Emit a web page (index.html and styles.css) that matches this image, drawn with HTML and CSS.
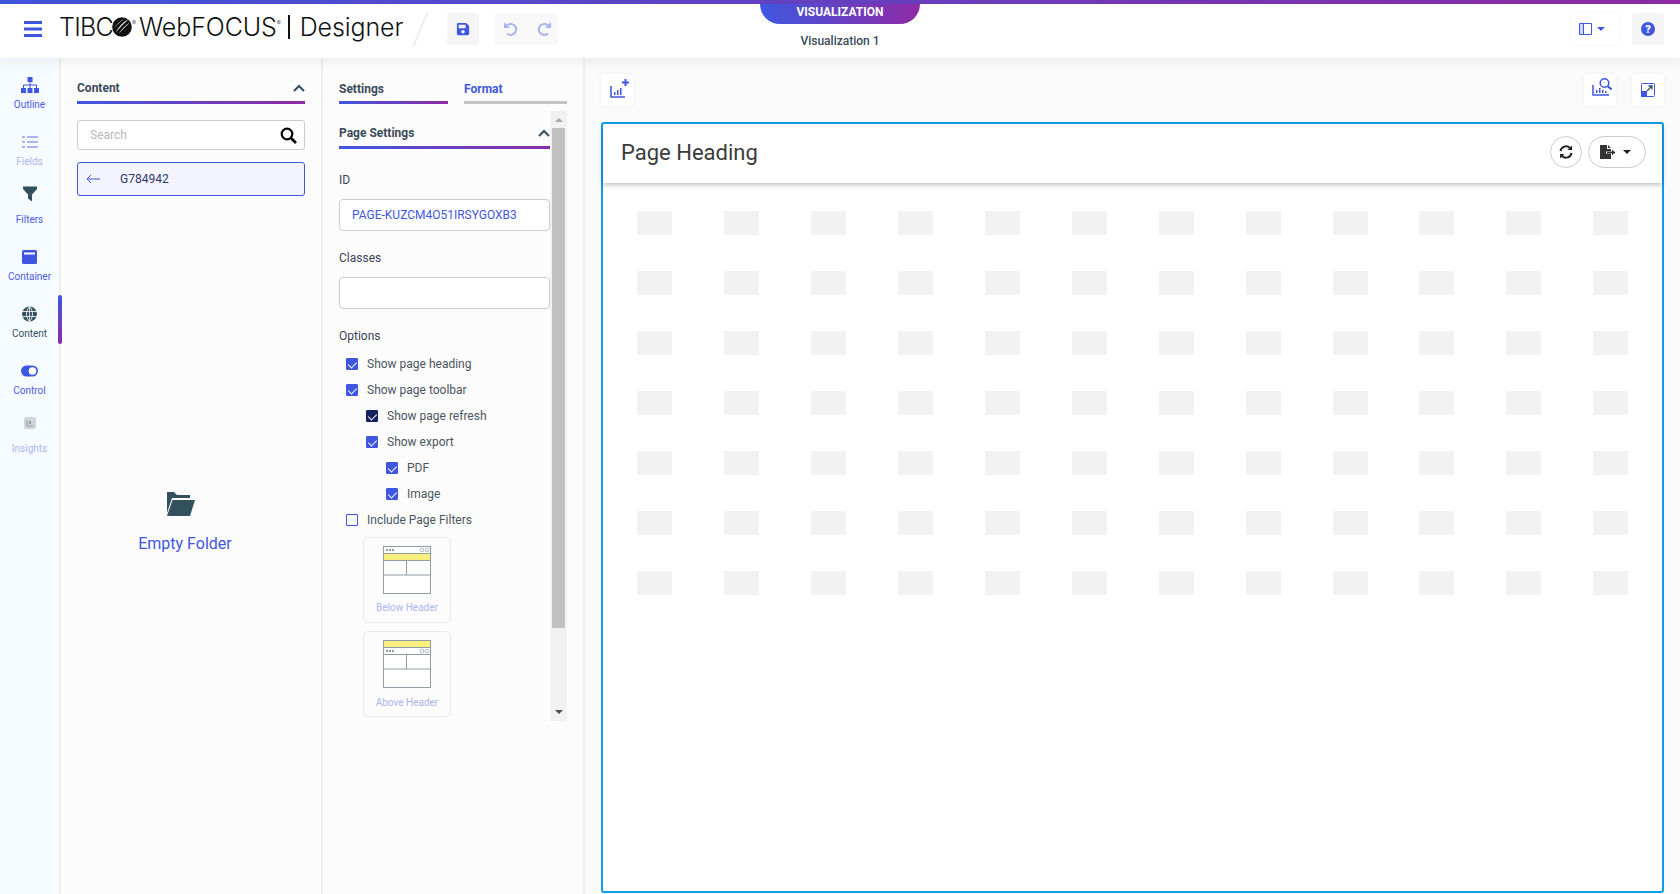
FILE: index.html
```html
<!DOCTYPE html>
<html>

<head>
    <meta charset="UTF-8">
    <title>WebFOCUS Designer</title>
    <link rel="stylesheet" href="styles.css">
</head>

<body>
    <div class="top-strip"></div>
    <header class="topbar">
        <div class="topbar-left">
            <svg class="hamburger" width="18" height="16" viewBox="0 0 18 16"><path fill="#3f57e0" d="M0 0h18v3H0zM0 6.500h18v3H0zM0 13h18v3H0z"/></svg>
            <div class="logo">
                <span class="logo-tibc">TIBC</span>
                <svg class="logo-ball" width="20" height="20" viewBox="0 0 20 20"><circle cx="10" cy="10" r="9.800" fill="#111"/><path fill="#fff" d="M3.500 15.500C6.500 10 11 5 17 1.800 12.500 6 8 10.500 3.500 15.500zM7 16.500c2.500-4.500 6-8 11.500-11.500C14 9 10.500 12.500 7 16.500zM2 11.500C4.500 7.500 8 4 13 1 9 4 5 7.500 2 11.500z"/></svg>
                <sup class="logo-reg">®</sup>
                <span class="logo-web">WebFOCUS</span>
                <sup class="logo-reg">®</sup>
                <span class="logo-pipe"></span>
                <span>Designer</span>
            </div>
            <div class="slash"></div>
            <button class="tool-btn grey">
                <svg width="14" height="14" viewBox="0 0 448 512"><path fill="#3f57e0" d="M433.900 129.900l-83.900-83.900A48 48 0 0 0 316.100 32H48C21.500 32 0 53.500 0 80v352c0 26.500 21.500 48 48 48h352c26.500 0 48-21.500 48-48V163.900a48 48 0 0 0-14.100-34zM224 416c-35.300 0-64-28.700-64-64 0-35.300 28.700-64 64-64s64 28.700 64 64c0 35.300-28.700 64-64 64zm96-304.500V212c0 6.600-5.400 12-12 12H76c-6.600 0-12-5.400-12-12V108c0-6.600 5.400-12 12-12h228.500c3.200 0 6.200 1.300 8.500 3.500l3.500 3.500c2.200 2.300 3.500 5.300 3.500 8.500z"/></svg>
            </button>
            <div class="undo-group">
                <svg width="14" height="14" viewBox="0 0 14 14"><path fill="#a9b5f0" d="M0 0v6h6z"/><path fill="none" stroke="#a9b5f0" stroke-width="2" d="M2.500 3.800A5.500 5.500 0 1 1 3 11.500"/></svg>
                <svg width="14" height="14" viewBox="0 0 14 14"><path fill="#a9b5f0" d="M14 0v6H8z"/><path fill="none" stroke="#a9b5f0" stroke-width="2" d="M11.500 3.800A5.500 5.500 0 1 0 11 11.500"/></svg>
            </div>
        </div>
        <div class="topbar-center">
            <div class="mode-tab">VISUALIZATION</div>
            <div class="doc-name">Visualization 1</div>
        </div>
        <div class="topbar-right">
            <button class="tool-btn wide">
                <svg width="13" height="12" viewBox="0 0 13 12"><path fill="#cdd4f8" d="M1 1h3v10H1z"/><path fill="none" stroke="#3f57e0" d="M.5.500h12v11H.5zM4.500.500v11"/></svg>
                <span class="caret blue"></span>
            </button>
            <button class="tool-btn grey">
                <svg width="14" height="14" viewBox="0 0 14 14"><circle cx="7" cy="7" r="7" fill="#3f57e0"/><text x="7" y="11" text-anchor="middle" class="help-mark">?</text></svg>
            </button>
        </div>
    </header>

    <div class="workspace">
        <nav class="sidebar">
            <a class="side-item">
                <svg width="18" height="16" viewBox="0 0 18 16"><path fill="#3f57e0" d="M6.500 0h5v5h-5zM0 11h5v5H0zM6.500 11h5v5h-5zM13 11h5v5h-5z"/><path fill="none" stroke="#3f57e0" d="M9 5v6M2.500 11V8h13v3"/></svg>
                <span>Outline</span>
            </a>
            <a class="side-item off">
                <svg width="16" height="12" viewBox="0 0 16 12"><path fill="#a9b5f0" d="M0 0h3v2H0zM5 0h11v2H5zM0 5h3v2H0zM5 5h11v2H5zM0 10h3v2H0zM5 10h11v2H5z"/></svg>
                <span>Fields</span>
            </a>
            <a class="side-item raised">
                <svg width="14" height="15" viewBox="0 0 14 15"><path fill="#33505f" d="M0 0h14v2.500L9 8v7L5 12V8L0 2.500z"/></svg>
                <span>Filters</span>
            </a>
            <a class="side-item">
                <svg width="15" height="14" viewBox="0 0 15 14"><rect width="15" height="14" rx="1.500" fill="#3f57e0"/><rect x="2" y="2.500" width="11" height="2" fill="#fff"/></svg>
                <span>Container</span>
            </a>
            <a class="side-item active">
                <svg width="15" height="15" viewBox="0 0 15 15"><circle cx="7.500" cy="7.500" r="7.500" fill="#33505f"/><path fill="none" stroke="#fff" stroke-width=".8" d="M0 5h15M0 10h15M7.500 0v15M7.500 0c-4 4-4 11 0 15M7.500 0c4 4 4 11 0 15"/></svg>
                <span>Content</span>
            </a>
            <a class="side-item">
                <svg width="17" height="11" viewBox="0 0 17 11"><rect width="17" height="11" rx="5.500" fill="#3f57e0"/><circle cx="11.500" cy="5.500" r="3.800" fill="#fff"/></svg>
                <span>Control</span>
            </a>
            <a class="side-item off raised">
                <svg width="14" height="14" viewBox="0 0 14 14"><rect x="1" y="1" width="12" height="12" rx="2" fill="#cfd6da"/><path fill="none" stroke="#8e9ea3" d="M4 4v6h6"/><path fill="#8e9ea3" d="M6 5h2v3H6z"/></svg>
                <span>Insights</span>
            </a>
        </nav>

        <section class="panel content-panel">
            <div class="panel-title">
                <span>Content</span>
                <svg class="chev" width="12" height="8" viewBox="0 0 12 8"><path fill="none" stroke="#33505f" stroke-width="2" d="M1 7l5-5 5 5"/></svg>
            </div>
            <div class="grad-line"></div>
            <div class="search-box">
                <span>Search</span>
                <svg width="17" height="17" viewBox="0 0 17 17"><circle cx="7" cy="7" r="5.300" fill="none" stroke="#000" stroke-width="2.200"/><path stroke="#000" stroke-width="2.600" d="M10.500 10.500l5.500 5.500"/></svg>
            </div>
            <div class="folder-row">
                <svg width="14" height="10" viewBox="0 0 14 10"><path fill="none" stroke="#3f57e0" d="M14 5H1M5 1L1 5l4 4"/></svg>
                <span>G784942</span>
            </div>
            <div class="empty-folder">
                <svg width="28" height="24" viewBox="0 0 28 24"><path fill="#33505f" d="M0 0h7l3 3h13v3H5L0 21zM5.500 8H28l-5 16H0z"/></svg>
                <span>Empty Folder</span>
            </div>
        </section>

        <section class="panel settings-panel">
            <div class="tabs">
                <div class="tab">Settings</div>
                <div class="tab format">Format</div>
            </div>
            <div class="settings-scroll">
                <div class="settings-body">
                    <div class="panel-title page-title">
                        <span>Page Settings</span>
                        <svg class="chev" width="12" height="8" viewBox="0 0 12 8"><path fill="none" stroke="#33505f" stroke-width="2" d="M1 7l5-5 5 5"/></svg>
                    </div>
                    <div class="grad-line"></div>
                    <label class="field-label first">ID</label>
                    <div class="text-field">PAGE-KUZCM4O51IRSYGOXB3</div>
                    <label class="field-label">Classes</label>
                    <div class="text-field"></div>
                    <label class="field-label">Options</label>
                    <ul class="options">
                        <li><i class="check on"></i>Show page heading</li>
                        <li><i class="check on"></i>Show page toolbar</li>
                        <li class="lvl1"><i class="check on dark"></i>Show page refresh</li>
                        <li class="lvl1"><i class="check on"></i>Show export</li>
                        <li class="lvl2"><i class="check on"></i>PDF</li>
                        <li class="lvl2"><i class="check on"></i>Image</li>
                        <li><i class="check"></i>Include Page Filters</li>
                    </ul>
                    <div class="thumb">
                        <svg width="48" height="48" viewBox="0 0 48 48">
                            <rect x=".5" y=".5" width="47" height="47" fill="#fff" stroke="#8e9ea3"/>
                            <path fill="#8e9ea3" d="M3 3h2v2H3zM6 3h2v2H6zM9 3h2v2H9z"/>
                            <circle cx="39" cy="4" r="1.800" fill="none" stroke="#8e9ea3" stroke-width=".7"/>
                            <circle cx="44" cy="4" r="1.800" fill="none" stroke="#8e9ea3" stroke-width=".7"/>
                            <rect x=".5" y="7.500" width="47" height="7" fill="#f9ef7f" stroke="#8e9ea3"/>
                            <path fill="none" stroke="#8e9ea3" d="M23.500 14v15M0 29h48"/>
                        </svg>
                        <span>Below Header</span>
                    </div>
                    <div class="thumb">
                        <svg width="48" height="48" viewBox="0 0 48 48">
                            <rect x=".5" y=".5" width="47" height="47" fill="#fff" stroke="#8e9ea3"/>
                            <rect x=".5" y=".5" width="47" height="7" fill="#f9ef7f" stroke="#8e9ea3"/>
                            <path fill="#8e9ea3" d="M3 10h2v2H3zM6 10h2v2H6zM9 10h2v2H9z"/>
                            <circle cx="39" cy="11" r="1.800" fill="none" stroke="#8e9ea3" stroke-width=".7"/>
                            <circle cx="44" cy="11" r="1.800" fill="none" stroke="#8e9ea3" stroke-width=".7"/>
                            <path fill="none" stroke="#8e9ea3" d="M0 14.500h48M23.500 14v15M0 29h48"/>
                        </svg>
                        <span>Above Header</span>
                    </div>
                </div>
                <div class="scrollbar">
                    <span class="arrow up"></span>
                    <div class="thumb-bar"></div>
                    <span class="arrow down"></span>
                </div>
            </div>
        </section>

        <main class="stage">
            <div class="stage-tools">
                <button class="tool-btn">
                    <svg class="icon-add" width="20" height="20" viewBox="0 0 20 20"><path fill="none" stroke="#3f57e0" stroke-width="1.500" d="M1 8v11h14"/><path fill="#3f57e0" d="M4 14h1.500v3H4zM7 12h1.500v5H7zM10 10h1.500v7H10z"/><path fill="none" stroke="#3f57e0" stroke-width="2" d="M15.500 1v7M12 4.500h7"/></svg>
                </button>
                <div class="tool-right">
                    <button class="tool-btn">
                        <svg class="icon-find" width="20" height="20" viewBox="0 0 20 20"><path fill="none" stroke="#3f57e0" stroke-width="1.500" d="M1 8v10h16"/><path fill="#3f57e0" d="M4 13h1.500v3H4zM7 11h1.500v5H7zM10 13h1.500v3H10zM13 14h1.500v2H13z"/><circle cx="12.500" cy="6" r="4.300" fill="none" stroke="#3f57e0" stroke-width="1.500"/><path stroke="#3f57e0" stroke-width="2" d="M15.500 9l4 3.500"/></svg>
                    </button>
                    <button class="tool-btn">
                        <svg width="14" height="14" viewBox="0 0 14 14"><rect x=".5" y=".5" width="13" height="13" rx="1" fill="#fff" stroke="#3f57e0"/><rect y="8" width="6" height="6" fill="#3f57e0"/><path fill="none" stroke="#33505f" stroke-width="1.300" d="M6 8l5-5M7.500 3H11v3.500"/></svg>
                    </button>
                </div>
            </div>
            <div class="page-card">
                <div class="card-head">
                    <h1>Page Heading</h1>
                    <div class="card-actions">
                        <button class="round-btn">
                            <svg width="14" height="14" viewBox="0 0 14 14"><path fill="none" stroke="#222" stroke-width="2" d="M1.500 6A5.600 5.600 0 0 1 11 3M12.500 8A5.600 5.600 0 0 1 3 11"/><path fill="#222" d="M13 .5V5H8.500zM1 13.500V9h4.500z"/></svg>
                        </button>
                        <button class="round-btn pill">
                            <svg width="16" height="14" viewBox="0 0 16 14"><path fill="#333" d="M0 0h7v4h4v2.500H6v2h5V14H0z"/><path fill="#333" d="M8 0l3 3H8zM7 6.800h5V4.800l3.500 2.700L12 10.200v-2H7z"/></svg>
                            <span class="caret"></span>
                        </button>
                    </div>
                </div>
                <div class="skeleton">
                    <i></i><i></i><i></i><i></i><i></i><i></i><i></i><i></i><i></i><i></i><i></i><i></i>
                    <i></i><i></i><i></i><i></i><i></i><i></i><i></i><i></i><i></i><i></i><i></i><i></i>
                    <i></i><i></i><i></i><i></i><i></i><i></i><i></i><i></i><i></i><i></i><i></i><i></i>
                    <i></i><i></i><i></i><i></i><i></i><i></i><i></i><i></i><i></i><i></i><i></i><i></i>
                    <i></i><i></i><i></i><i></i><i></i><i></i><i></i><i></i><i></i><i></i><i></i><i></i>
                    <i></i><i></i><i></i><i></i><i></i><i></i><i></i><i></i><i></i><i></i><i></i><i></i>
                    <i></i><i></i><i></i><i></i><i></i><i></i><i></i><i></i><i></i><i></i><i></i><i></i>
                </div>
            </div>
        </main>
    </div>
</body>

</html>
```

FILE: styles.css
```css
* {
    box-sizing: border-box;
}

body {
    margin: 0;
    height: 894px;
    overflow: hidden;
    background-color: #fcfcfc;
    font-family: Roboto, sans-serif;
    font-size: 12px;
    color: #3a4b57;
    display: flex;
    flex-direction: column;
}

button {
    font-family: inherit;
    border: none;
    padding: 0;
}

.top-strip {
    height: 4px;
    background: linear-gradient(90deg, #3f57e0, #8f2aa5);
}

.topbar {
    height: 54px;
    display: grid;
    grid-template-columns: 1fr 160px 1fr;
    background-color: #fff;
    box-shadow: 0 2px 12px rgba(0, 0, 0, 0.07);
    position: relative;
    z-index: 2;
}

.topbar-left {
    display: flex;
    align-items: center;
    padding: 0 0 4px 24px;
}

.logo {
    width: 344px;
    flex: none;
    display: flex;
    align-items: center;
    margin-left: 17px;
    padding-bottom: 4px;
    font-family: Inter, sans-serif;
    font-size: 25px;
    font-weight: 300;
    color: #111;
    letter-spacing: -0.1px;
}

.logo-tibc {
    letter-spacing: -0.7px;
}

.logo-ball {
    flex: none;
    margin-left: -1px;
}

.logo-reg {
    font-size: 6px;
    align-self: flex-start;
    margin-top: 8px;
    margin-right: 3px;
    line-height: 1;
}

.logo-pipe {
    width: 2px;
    height: 24px;
    flex: none;
    background-color: #111;
    margin: 0 10px 0 4px;
}

.slash {
    width: 15px;
    height: 36px;
    margin-left: 10px;
    background: linear-gradient(to bottom right, transparent 46%, #efefef 46%, #efefef 54%, transparent 54%);
}

.tool-btn {
    width: 32px;
    height: 32px;
    border-radius: 3px;
    background-color: #fff;
    box-shadow: 0 0 4px rgba(0, 0, 0, 0.06);
    display: flex;
    align-items: center;
    justify-content: center;
    flex: none;
}

.tool-btn.grey {
    background-color: #f5f5f5;
    box-shadow: none;
}

.tool-btn.wide {
    width: 48px;
    justify-content: flex-start;
    gap: 5px;
    padding-left: 8px;
}

.topbar-left .tool-btn {
    margin-left: 19px;
}

.undo-group {
    width: 64px;
    height: 32px;
    margin-left: 15px;
    padding-left: 10px;
    background-color: #f8f8f8;
    border-radius: 3px;
    display: flex;
    align-items: center;
    gap: 19px;
}

.topbar-center {
    display: flex;
    flex-direction: column;
    align-items: center;
}

.mode-tab {
    width: 160px;
    height: 20px;
    background: linear-gradient(90deg, #3f57e0, #8f2aa5);
    border-radius: 0 0 20px 20px;
    color: #fff;
    font-weight: 700;
    font-size: 12px;
    text-align: center;
    line-height: 16px;
}

.doc-name {
    margin-top: 10px;
    font-weight: 500;
    line-height: 14px;
}

.topbar-right {
    display: flex;
    align-items: center;
    justify-content: flex-end;
    gap: 13px;
    padding: 0 16px 4px 0;
}

.help-mark {
    font-family: Roboto, sans-serif;
    font-size: 11px;
    font-weight: 900;
    fill: #fff;
}

.caret {
    width: 0;
    height: 0;
    border-left: 4px solid transparent;
    border-right: 4px solid transparent;
    border-top: 4px solid #222;
}

.caret.blue {
    border-left-width: 4.5px;
    border-right-width: 4.5px;
    border-top-color: #3f57e0;
}

.workspace {
    flex: 1;
    display: flex;
    min-height: 0;
}

.sidebar {
    width: 61px;
    flex: none;
    background-color: #f6fbff;
    border-right: 2px solid #eeeeee;
    padding-top: 16px;
}

.side-item {
    height: 57.3px;
    display: flex;
    flex-direction: column;
    align-items: center;
    font-size: 10px;
    color: #4a5be0;
    position: relative;
}

.side-item svg {
    height: 22px;
    flex: none;
}

.side-item span {
    margin-top: 3px;
    line-height: 12px;
}

.side-item.raised svg {
    margin-top: -6px;
    margin-bottom: 6px;
}

.side-item.off {
    color: #aab6ee;
}

.side-item.active {
    color: #33505f;
}

.side-item.active::after {
    content: "";
    position: absolute;
    right: -3px;
    top: -8px;
    width: 4px;
    height: 49px;
    border-radius: 2px;
    background: linear-gradient(180deg, #3f57e0, #8f2aa5);
}

.panel {
    width: 262px;
    flex: none;
    border-right: 2px solid #eeeeee;
    background-color: #fcfcfc;
}

.content-panel {
    padding: 19px 16px 0 16px;
}

.panel-title {
    height: 24px;
    padding-bottom: 3px;
    display: flex;
    align-items: center;
    justify-content: space-between;
    font-weight: 700;
    color: #3a4b57;
}

.grad-line {
    height: 3px;
    background: linear-gradient(90deg, #3f57e0, #8f2aa5);
}

.search-box {
    height: 30px;
    margin-top: 16px;
    border: 1px solid #cccccc;
    border-radius: 3px;
    background-color: #fff;
    display: flex;
    align-items: center;
    justify-content: space-between;
    padding: 0 7px 0 12px;
    color: #b9b9b9;
}

.folder-row {
    height: 34px;
    margin-top: 12px;
    border: 1px solid #3f57e0;
    border-radius: 3px;
    background-color: #f3f4fd;
    display: flex;
    align-items: center;
    padding-left: 8px;
    color: #2d3a66;
}

.folder-row span {
    margin-left: 20px;
}

.empty-folder {
    margin-top: 296px;
    margin-right: 12px;
    display: flex;
    flex-direction: column;
    align-items: center;
    gap: 18px;
    font-size: 16px;
    color: #3f57e0;
}

.empty-folder svg {
    margin-right: 8px;
}

.settings-panel {
    padding: 19px 0 0 16px;
    display: flex;
    flex-direction: column;
}

.tabs {
    display: flex;
    gap: 16px;
    width: 228px;
}

.tab {
    width: 109px;
    height: 27px;
    border-bottom: 3px solid transparent;
    border-image: linear-gradient(90deg, #3f57e0, #8f2aa5) 1;
    font-weight: 700;
    line-height: 25px;
}

.tab.format {
    flex: 1;
    color: #3f57e0;
    border-image: none;
    border-bottom-color: #c4c4c4;
}

.settings-scroll {
    display: flex;
    width: 228px;
    height: 610px;
    margin-top: 7px;
}

.settings-body {
    width: 211px;
    flex: none;
}

.panel-title.page-title {
    height: 35px;
    padding: 9px 0 0;
}

.field-label {
    display: block;
    line-height: 14px;
    color: #3a4458;
}

.field-label.first {
    margin-top: 24px;
}

.text-field {
    height: 32px;
    margin: 12px 0 20px;
    border: 1px solid #cccccc;
    border-radius: 4px;
    background-color: #fff;
    color: #3f57e0;
    line-height: 30px;
    padding-left: 12px;
}

.options {
    list-style: none;
    margin: 8px 0 0;
    padding: 0;
}

.options li {
    height: 26px;
    display: flex;
    align-items: center;
    padding-left: 7px;
    color: #4a5560;
}

.options li.lvl1 {
    padding-left: 27px;
}

.options li.lvl2 {
    padding-left: 47px;
}

.check {
    width: 12px;
    height: 12px;
    border: 1px solid #3f57e0;
    border-radius: 1px;
    margin-right: 9px;
    flex: none;
    position: relative;
}

.check.on {
    background-color: #3f57e0;
}

.check.dark {
    background-color: #14235f;
    border-color: #14235f;
}

.check.on::after {
    content: "";
    position: absolute;
    left: 3px;
    top: 1px;
    width: 4px;
    height: 7px;
    border: solid #fff;
    border-width: 0 1.5px 1.5px 0;
    transform: rotate(45deg);
}

.thumb {
    width: 88px;
    height: 86px;
    margin: 4px 0 8px 24px;
    border: 1px solid #e8e8e8;
    border-radius: 5px;
    display: flex;
    flex-direction: column;
    align-items: center;
    padding-top: 8px;
    font-size: 10px;
    color: #aab6ee;
    background-color: #fcfcfc;
}

.thumb + .thumb {
    margin-top: 0;
}

.thumb span {
    margin-top: 8px;
    line-height: 12px;
}

.thumb + .thumb span {
    margin-top: 9px;
}

.scrollbar {
    width: 17px;
    flex: none;
    background-color: #f1f1f1;
    display: flex;
    flex-direction: column;
    align-items: center;
}

.thumb-bar {
    width: 13px;
    height: 500px;
    margin-top: 6px;
    background-color: #c1c1c1;
}

.arrow {
    width: 0;
    height: 0;
    border-left: 4px solid transparent;
    border-right: 4px solid transparent;
}

.arrow.up {
    margin-top: 7px;
    border-bottom: 4px solid #a8a8a8;
}

.arrow.down {
    margin-top: auto;
    margin-bottom: 7px;
    border-top: 4px solid #505050;
}

.stage {
    flex: 1;
    min-width: 0;
    background-color: #fafafa;
    padding: 16px 16px 0 16px;
    display: flex;
    flex-direction: column;
}

.stage-tools {
    display: flex;
    justify-content: space-between;
}

.icon-add {
    margin: 0 0 5px 6px;
}

.icon-find {
    margin: 0 0 6px 3px;
}

.tool-right {
    display: flex;
    gap: 16px;
}

.page-card {
    width: 1063px;
    height: 771px;
    margin-top: 16px;
    border: 2px solid #0e9ee6;
    border-radius: 3px;
    background-color: #fff;
}

.card-head {
    height: 59px;
    display: flex;
    align-items: center;
    justify-content: space-between;
    padding: 0 16px 3px 18px;
    box-shadow: 0 2px 5px rgba(0, 0, 0, 0.25);
}

.card-head h1 {
    margin: 0;
    font-size: 22px;
    font-weight: 400;
    color: #3b3b3b;
}

.card-actions {
    display: flex;
    gap: 6px;
}

.round-btn {
    width: 32px;
    height: 32px;
    border: 1px solid #cccccc;
    border-radius: 16px;
    background-color: #fff;
    display: flex;
    align-items: center;
    justify-content: center;
}

.round-btn.pill {
    width: 58px;
    justify-content: flex-start;
    padding-left: 11px;
    gap: 7px;
}

.skeleton {
    display: grid;
    grid-template-columns: repeat(12, 35px);
    grid-auto-rows: 24px;
    column-gap: 51.95px;
    row-gap: 36px;
    padding: 28px 0 0 34px;
}

.skeleton i {
    background-color: #f2f2f2;
}
```
